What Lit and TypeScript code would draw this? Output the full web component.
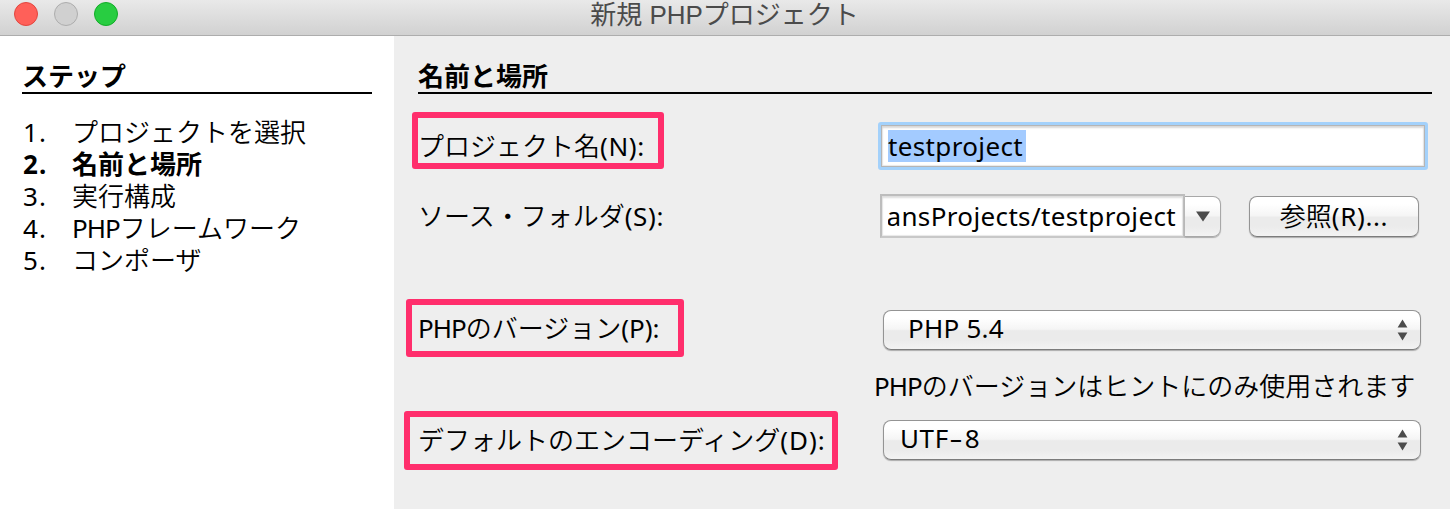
import { LitElement, html, css } from "lit";
import { customElement, property } from "lit/decorators.js";
import { classMap } from "lit/directives/class-map.js";

const STEPS: { label: string; latin?: string; current?: boolean }[] = [
  { label: "プロジェクトを選択" },
  { label: "名前と場所", current: true },
  { label: "実行構成" },
  { label: "フレームワーク", latin: "PHP" },
  { label: "コンポーザ" },
];

@customElement("popup-select")
class PopupSelect extends LitElement {
  @property({ type: Boolean }) indented = false;

  static styles = css`
    :host {
      display: block;
      align-self: start;
      padding-left: 5px;
    }
    .select {
      box-sizing: border-box;
      width: 538px;
      height: 40px;
      display: flex;
      align-items: center;
      justify-content: space-between;
      padding: 0 12px 4px 16px;
      border: 1px solid #949494;
      border-bottom-color: #7c7c7c;
      border-radius: 8px;
      background: linear-gradient(#fff 0%, #fff 18%, #f5f5f5 48%, #ebebeb 52%, #ebebeb 75%, #f3f3f3 100%);
      box-shadow: 0 1px 1px rgba(0, 0, 0, 0.28);
    }
    .indented {
      padding-left: 24px;
    }
    .arrows {
      display: block;
      margin-top: 4px;
    }
  `;

  render() {
    return html`<div class=${classMap({ select: true, indented: this.indented })}>
      <slot></slot>
      <svg class="arrows" width="11" height="22" viewBox="0 0 11 22">
        <path d="M5.5 0.5 10.4 8.5H0.6ZM0.6 13.5H10.4L5.5 21.5Z" fill="#4c4c4c" />
      </svg>
    </div>`;
  }
}

@customElement("app-root")
class AppRoot extends LitElement {
  static styles = css`
    :host {
      display: flex;
      flex-direction: column;
      width: 1450px;
      height: 509px;
      overflow: hidden;
      background: #eeeeee;
      color: #000;
      font: 350 26px/32px "Noto Sans", "Noto Sans CJK JP", sans-serif;
      white-space: nowrap;
    }
    .titlebar {
      box-sizing: border-box;
      flex: none;
      height: 36px;
      display: grid;
      grid-template-columns: 1fr auto 1fr;
      padding: 0 15px 0 14px;
      border-bottom: 1px solid #adadad;
      background: linear-gradient(#e9e9e9, #d1d1d1);
    }
    .lights {
      display: flex;
      gap: 16px;
      padding-top: 2px;
    }
    .light {
      box-sizing: border-box;
      width: 24px;
      height: 24px;
      border: 1px solid #adadad;
      border-radius: 50%;
      background: #d0d0d0;
    }
    .close {
      background: #ff6059;
      border-color: #e2463f;
    }
    .zoom {
      background: #28cd41;
      border-color: #12ac28;
    }
    .title {
      font: 400 26px/30px "Liberation Sans", "Noto Sans CJK JP", sans-serif;
      color: #4b4b4b;
    }
    .body {
      flex: 1;
      display: flex;
    }
    .steps {
      box-sizing: border-box;
      width: 394px;
      padding: 24px 22px 0;
      background: #fff;
    }
    .heading {
      box-sizing: border-box;
      height: 34px;
      border-bottom: 2px solid #000;
      font-weight: 700;
      line-height: 32px;
    }
    .list {
      list-style: none;
      margin: 0;
      padding: 22px 0 0;
    }
    .step {
      display: grid;
      grid-template-columns: 50px 1fr;
      height: 32px;
    }
    .latin,
    .num {
      font-weight: 400;
    }
    .num {
      padding-left: 1px;
      letter-spacing: 1px;
    }
    .current,
    .current .num {
      font-weight: 700;
    }
    .php {
      letter-spacing: -1px;
    }
    .key {
      letter-spacing: 0.6px;
    }
    .field {
      letter-spacing: 0.36px;
    }
    .value {
      letter-spacing: 0.25px;
    }
    .encoding .value {
      letter-spacing: 0.6px;
    }
    .dash {
      display: inline-block;
      margin: 0 4px 0 3px;
      transform: scaleX(1.6);
    }
    .content {
      box-sizing: border-box;
      width: 1056px;
      padding: 24px 18px 0 24px;
    }
    .form {
      padding-top: 28px;
    }
    .row {
      display: grid;
      grid-template-columns: 460px 1fr;
      align-items: center;
    }
    .name {
      height: 48px;
    }
    .folder {
      height: 44px;
      margin-top: 24px;
    }
    .version {
      height: 41px;
      margin-top: 72px;
    }
    .version .label {
      padding-bottom: 6px;
    }
    .encoding {
      height: 41px;
    }
    .encoding .label {
      padding-bottom: 1px;
    }
    .encoding .key {
      letter-spacing: 1px;
    }
    .hint {
      height: 69px;
      box-sizing: border-box;
      padding: 19px 0 0 456px;
    }
    .label {
      position: relative;
      justify-self: start;
    }
    .mark {
      position: absolute;
      box-sizing: border-box;
      border: 6px solid #ff2e6c;
      border-radius: 3px;
    }
    .mark-name {
      left: -6px;
      top: -18px;
      width: 252px;
      height: 57px;
    }
    .mark-version {
      left: -12px;
      top: -13px;
      width: 278px;
      height: 58px;
    }
    .mark-encoding {
      left: -14px;
      top: -13px;
      width: 434px;
      height: 59px;
    }
    .input {
      box-sizing: border-box;
      width: 550px;
      height: 48px;
      padding: 5px 7px;
      border: 3px solid #a3d1fb;
      border-radius: 3px;
      background: #fff;
      box-shadow: inset 0 0 0 1px #b5b5b5, inset 0 2px 2px 1px #d8d8d8, inset 0 0 1px 2px #e8e8e8;
    }
    .selected {
      display: inline-block;
      width: 138px;
      height: 32px;
      background: #a3cbff;
    }
    .controls {
      display: flex;
      align-items: flex-start;
      height: 44px;
      padding-left: 2px;
    }
    .combo {
      box-sizing: border-box;
      width: 305px;
      height: 44px;
      padding: 4px 7px 0 6px;
      border: 2px solid #bdbdbd;
      border-bottom-color: #c8c8c8;
      background: #fff;
      box-shadow: inset 0 2px 2px #dedede, inset 0 0 1px 1px #e8e8e8;
    }
    .clip {
      display: flex;
      justify-content: flex-end;
      overflow: hidden;
    }
    .drop,
    .button {
      box-sizing: border-box;
      height: 41px;
      margin-top: 2px;
      display: flex;
      align-items: center;
      justify-content: center;
      border: 1px solid #949494;
      background: linear-gradient(#fff 0%, #fff 18%, #f5f5f5 48%, #ebebeb 52%, #ebebeb 75%, #f3f3f3 100%);
      box-shadow: 0 1px 1px rgba(0, 0, 0, 0.28);
    }
    .drop {
      width: 36px;
      border-color: #a8a8a8;
      border-left: 0;
      border-radius: 0 8px 8px 0;
    }
    .button {
      width: 170px;
      margin-left: 28px;
      padding-bottom: 1px;
      border-bottom-color: #7c7c7c;
      border-radius: 8px;
    }
  `;

  render() {
    return html`
      <header class="titlebar">
        <div class="lights">
          <span class="light close"></span>
          <span class="light"></span>
          <span class="light zoom"></span>
        </div>
        <div class="title">新規 PHPプロジェクト</div>
      </header>
      <div class="body">
        <nav class="steps">
          <div class="heading">ステップ</div>
          <ol class="list">
            ${STEPS.map(
              (s, i) => html`<li class=${classMap({ step: true, current: !!s.current })}>
                <span class="num">${i + 1}.</span>
                <span>${s.latin ? html`<span class="latin php">${s.latin}</span>` : ""}${s.label}</span>
              </li>`
            )}
          </ol>
        </nav>
        <main class="content">
          <div class="heading">名前と場所</div>
          <div class="form">
            <div class="row name">
              <div class="label">プロジェクト名<span class="latin key">(N):</span><span class="mark mark-name"></span></div>
              <div class="input"><span class="selected latin field">testproject</span></div>
            </div>
            <div class="row folder">
              <div class="label">ソース・フォルダ<span class="latin key">(S):</span></div>
              <div class="controls">
                <div class="combo"><div class="clip"><span class="latin field">ansProjects/testproject</span></div></div>
                <div class="drop">
                  <svg width="14" height="11" viewBox="0 0 14 11"><path d="M0 0.5H14L7 10.5Z" fill="#4c4c4c" /></svg>
                </div>
                <div class="button">参照<span class="latin key">(R)...</span></div>
              </div>
            </div>
            <div class="row version">
              <div class="label"><span class="latin php">PHP</span>のバージョン<span class="latin">(P):</span><span class="mark mark-version"></span></div>
              <popup-select indented><span class="latin value">PHP 5.4</span></popup-select>
            </div>
            <div class="hint"><span class="latin php">PHP</span>のバージョンはヒントにのみ使用されます</div>
            <div class="row encoding">
              <div class="label">デフォルトのエンコーディング<span class="latin key">(D):</span><span class="mark mark-encoding"></span></div>
              <popup-select><span class="latin value">UTF<span class="dash">-</span>8</span></popup-select>
            </div>
          </div>
        </main>
      </div>
    `;
  }
}
